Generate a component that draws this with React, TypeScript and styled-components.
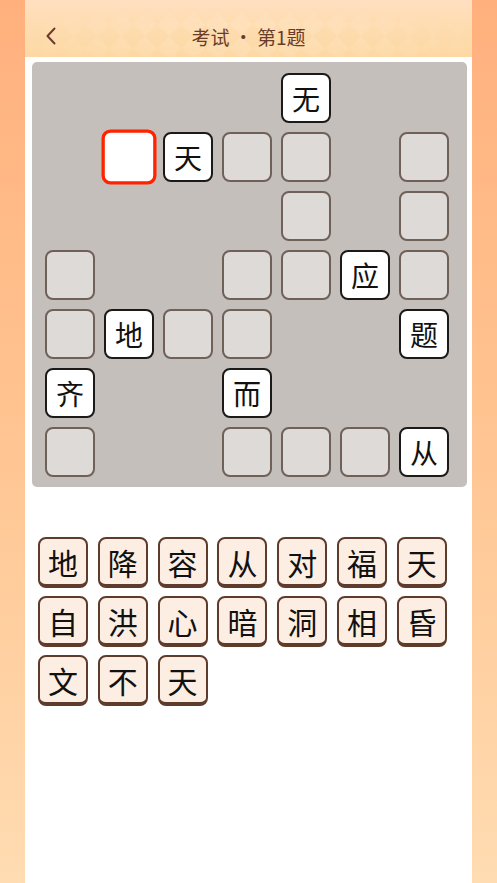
import React from "react";
import styled, { createGlobalStyle } from "styled-components";

const GlobalStyle = createGlobalStyle`
  html, body {
    margin: 0;
    padding: 0;
  }
  body {
    font-family: "Noto Sans CJK SC", "Noto Sans", sans-serif;
  }
`;

const Page = styled.div`
  min-height: 100vh;
  display: flex;
  justify-content: center;
  background: linear-gradient(180deg, #ffb07d 0%, #ffc592 50%, #ffdcb2 100%);
`;

const Column = styled.main`
  width: 447px;
  min-height: 883px;
  background: #ffffff;
`;

const Header = styled.header`
  position: relative;
  height: 57px;
  padding-top: 15px;
  box-sizing: border-box;
  display: grid;
  grid-template-columns: 52px 1fr 52px;
  align-items: center;
  background: linear-gradient(180deg, #ffdfc0 0%, #fedcb0 45%, #fdd8a2 100%);
  overflow: hidden;

  &::before {
    content: "";
    position: absolute;
    inset: 12px 0 0 0;
    background-image: conic-gradient(
      from 45deg,
      rgba(255, 255, 255, 0.13) 25%,
      transparent 0 50%,
      rgba(255, 255, 255, 0.13) 0 75%,
      transparent 0
    );
    background-size: 24px 24px;
    -webkit-mask-image: radial-gradient(ellipse 60% 90% at 50% 60%, #000 30%, transparent 100%);
    mask-image: radial-gradient(ellipse 60% 90% at 50% 60%, #000 30%, transparent 100%);
  }
`;

const BackButton = styled.button`
  position: relative;
  justify-self: center;
  display: flex;
  align-items: center;
  justify-content: center;
  width: 30px;
  height: 30px;
  padding: 0;
  border: none;
  background: none;
  cursor: pointer;
`;

const Title = styled.h1`
  position: relative;
  margin: 0;
  text-align: center;
  font-size: 19px;
  font-weight: 400;
  color: #6b3b2b;
`;

const Board = styled.section`
  margin: 5px 5px 0 7px;
  padding: 11px 18px 10px 13px;
  background: #c4bfbb;
  border-radius: 5px;
  display: grid;
  grid-template-columns: repeat(7, 50px);
  grid-auto-rows: 50px;
  gap: 9px;
`;

type CellKind = "none" | "empty" | "filled" | "selected";

const Cell = styled.div<{ $kind: CellKind }>`
  box-sizing: border-box;
  display: flex;
  align-items: center;
  justify-content: center;
  font-size: 28px;
  line-height: 1;
  color: #111;
  border-radius: 8px;
  visibility: ${(p) => (p.$kind === "none" ? "hidden" : "visible")};
  background: ${(p) => (p.$kind === "empty" ? "#dedad7" : "#ffffff")};
  border: ${(p) =>
    p.$kind === "selected"
      ? "3px solid #ff2300"
      : p.$kind === "filled"
      ? "2px solid #1c1a19"
      : "2px solid #6f6058"};
  transform: ${(p) => (p.$kind === "selected" ? "scale(1.1)" : "none")};
`;

const Tray = styled.section`
  margin-top: 50px;
  padding-left: 13px;
  display: grid;
  grid-template-columns: repeat(7, 50px);
  column-gap: 9.8px;
  row-gap: 8px;
`;

const Tile = styled.button`
  box-sizing: border-box;
  width: 50px;
  height: 51px;
  padding: 0;
  display: flex;
  align-items: center;
  justify-content: center;
  background: #fdeee3;
  border: 2px solid #5e3b2b;
  border-bottom-width: 4px;
  border-radius: 8px;
  font-family: "Noto Sans CJK SC", sans-serif;
  font-size: 30px;
  line-height: 1;
  color: #111;
  cursor: pointer;
`;

// 7x7 board, "." = no cell, "_" = blank, "*" = current blank, other = given char
const layout = [
  "....无..",
  ".*天__._",
  "...._._",
  "_..__应_",
  "_地__..题",
  "齐..而...",
  "_..___从",
];

const tiles = [
  "地", "降", "容", "从", "对", "福", "天",
  "自", "洪", "心", "暗", "洞", "相", "昏",
  "文", "不", "天",
];

const cellKind = (ch: string): CellKind => {
  if (ch === ".") return "none";
  if (ch === "_") return "empty";
  if (ch === "*") return "selected";
  return "filled";
};

const App = () => {
  return (
    <>
      <GlobalStyle />
      <Page>
        <Column>
          <Header>
            <BackButton aria-label="返回">
              <svg width="12" height="18" viewBox="0 0 12 18" fill="none">
                <polyline
                  points="9.5,1.5 2.5,9 9.5,16.5"
                  stroke="#6b3b2b"
                  strokeWidth="2"
                  strokeLinecap="round"
                  strokeLinejoin="round"
                />
              </svg>
            </BackButton>
            <Title>考试 • 第1题</Title>
            <span />
          </Header>

          <Board>
            {layout.map((row, r) =>
              Array.from(row).map((ch, c) => {
                const kind = cellKind(ch);
                return (
                  <Cell key={`${r}-${c}`} $kind={kind}>
                    {kind === "filled" ? ch : null}
                  </Cell>
                );
              })
            )}
          </Board>

          <Tray>
            {tiles.map((t, i) => (
              <Tile key={i}>{t}</Tile>
            ))}
          </Tray>
        </Column>
      </Page>
    </>
  );
};

export default App;
